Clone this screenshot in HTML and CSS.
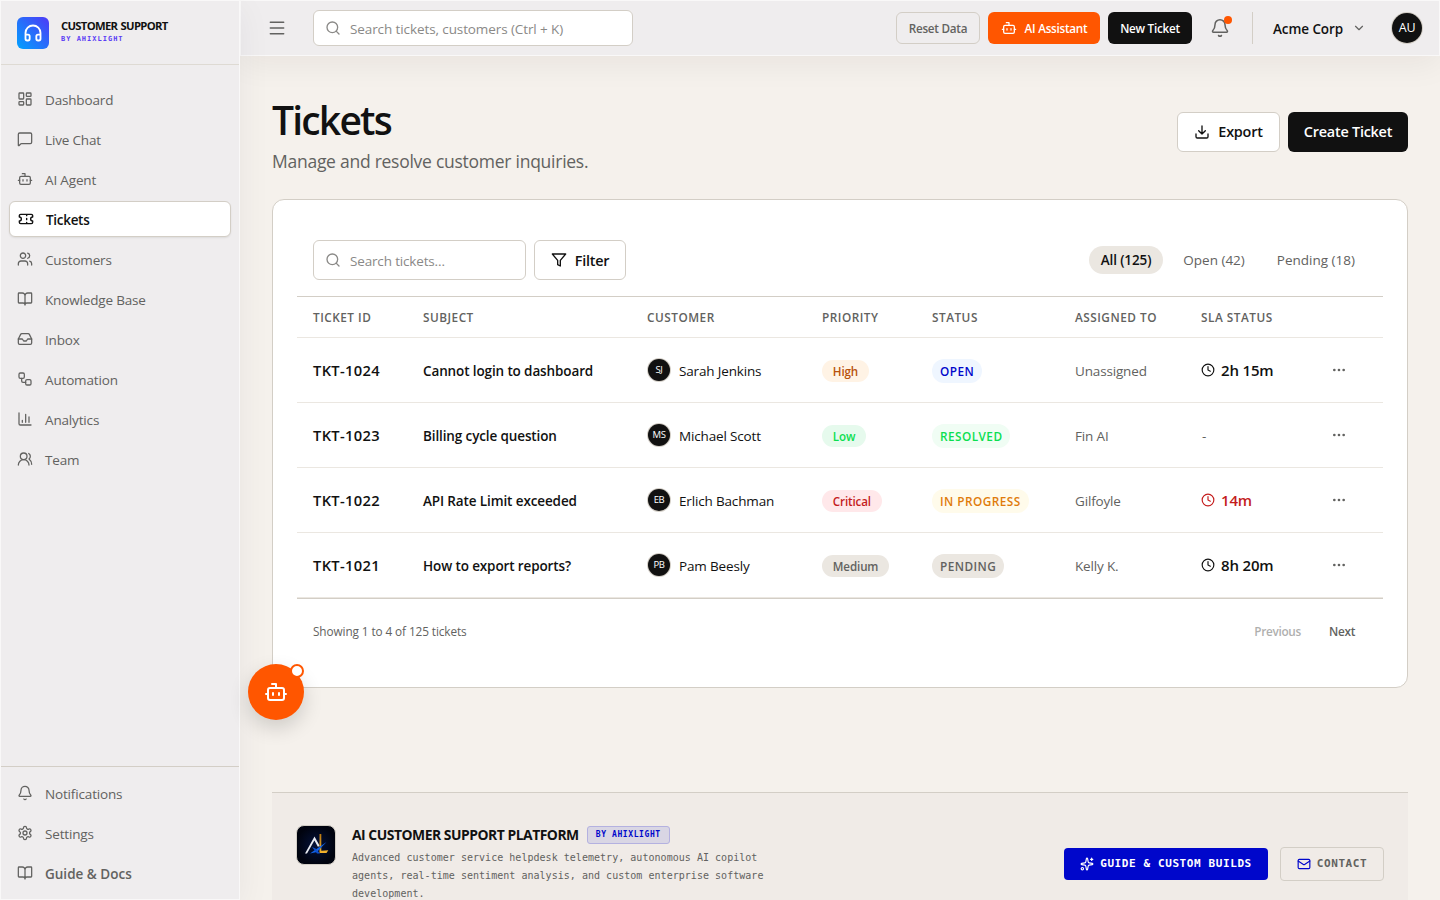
FILE: index.html
```html
<!DOCTYPE html>
<html lang="en">
<head>
<meta charset="utf-8">
<title>Tickets</title>
<link rel="stylesheet" href="styles.css">
</head>
<body>
<svg class="defs" aria-hidden="true">
  <symbol id="dash" viewBox="0 0 24 24"><rect x="3" y="3" width="7" height="9" rx="1"/><rect x="14" y="3" width="7" height="5" rx="1"/><rect x="14" y="12" width="7" height="9" rx="1"/><rect x="3" y="16" width="7" height="5" rx="1"/></symbol>
  <symbol id="chat" viewBox="0 0 24 24"><path d="M22 17a2 2 0 0 1-2 2H6.828a2 2 0 0 0-1.414.586l-2.202 2.202A.71.71 0 0 1 2 21.286V5a2 2 0 0 1 2-2h16a2 2 0 0 1 2 2z"/></symbol>
  <symbol id="bot" viewBox="0 0 24 24"><path d="M12 8V4H8"/><rect x="4" y="8" width="16" height="12" rx="2"/><path d="M2 14h2M20 14h2M15 13v2M9 13v2"/></symbol>
  <symbol id="ticket" viewBox="0 0 24 24"><path d="M2 9a3 3 0 0 1 0 6v2a2 2 0 0 0 2 2h16a2 2 0 0 0 2-2v-2a3 3 0 0 1 0-6V7a2 2 0 0 0-2-2H4a2 2 0 0 0-2 2ZM13 5v2M13 17v2M13 11v2"/></symbol>
  <symbol id="users" viewBox="0 0 24 24"><path d="M16 21v-2a4 4 0 0 0-4-4H6a4 4 0 0 0-4 4v2"/><circle cx="9" cy="7" r="4"/><path d="M22 21v-2a4 4 0 0 0-3-3.87M16 3.13a4 4 0 0 1 0 7.75"/></symbol>
  <symbol id="book" viewBox="0 0 24 24"><path d="M12 7v14M3 18a1 1 0 0 1-1-1V4a1 1 0 0 1 1-1h5a4 4 0 0 1 4 4 4 4 0 0 1 4-4h5a1 1 0 0 1 1 1v13a1 1 0 0 1-1 1h-6a3 3 0 0 0-3 3 3 3 0 0 0-3-3z"/></symbol>
  <symbol id="inbox" viewBox="0 0 24 24"><path d="M22 12h-6l-2 3h-4l-2-3H2"/><path d="M5.45 5.11 2 12v6a2 2 0 0 0 2 2h16a2 2 0 0 0 2-2v-6l-3.45-6.89A2 2 0 0 0 16.76 4H7.24a2 2 0 0 0-1.79 1.11z"/></symbol>
  <symbol id="flow" viewBox="0 0 24 24"><rect x="3" y="3" width="8" height="8" rx="2"/><path d="M7 11v4a2 2 0 0 0 2 2h4"/><rect x="13" y="13" width="8" height="8" rx="2"/></symbol>
  <symbol id="chart" viewBox="0 0 24 24"><path d="M3 3v16a2 2 0 0 0 2 2h16M18 17V9M13 17V5M8 17v-3"/></symbol>
  <symbol id="team" viewBox="0 0 24 24"><path d="M18 21a8 8 0 0 0-16 0"/><circle cx="10" cy="8" r="5"/><path d="M22 20c0-3.37-2-6.5-4-8a5 5 0 0 0-.45-8.3"/></symbol>
  <symbol id="bell" viewBox="0 0 24 24"><path d="M10.268 21a2 2 0 0 0 3.464 0M3.262 15.326A1 1 0 0 0 4 17h16a1 1 0 0 0 .74-1.673C19.41 13.956 18 12.499 18 8A6 6 0 0 0 6 8c0 4.499-1.411 5.956-2.738 7.326"/></symbol>
  <symbol id="gear" viewBox="0 0 24 24"><path d="M12.22 2h-.44a2 2 0 0 0-2 2v.18a2 2 0 0 1-1 1.73l-.43.25a2 2 0 0 1-2 0l-.15-.08a2 2 0 0 0-2.73.73l-.22.38a2 2 0 0 0 .73 2.73l.15.1a2 2 0 0 1 1 1.72v.51a2 2 0 0 1-1 1.74l-.15.09a2 2 0 0 0-.73 2.73l.22.38a2 2 0 0 0 2.73.73l.15-.08a2 2 0 0 1 2 0l.43.25a2 2 0 0 1 1 1.73V20a2 2 0 0 0 2 2h.44a2 2 0 0 0 2-2v-.18a2 2 0 0 1 1-1.73l.43-.25a2 2 0 0 1 2 0l.15.08a2 2 0 0 0 2.73-.73l.22-.39a2 2 0 0 0-.73-2.73l-.15-.08a2 2 0 0 1-1-1.74v-.5a2 2 0 0 1 1-1.74l.15-.09a2 2 0 0 0 .73-2.73l-.22-.38a2 2 0 0 0-2.73-.73l-.15.08a2 2 0 0 1-2 0l-.43-.25a2 2 0 0 1-1-1.73V4a2 2 0 0 0-2-2z"/><circle cx="12" cy="12" r="3"/></symbol>
  <symbol id="phones" viewBox="0 0 24 24"><path d="M3 14h3a2 2 0 0 1 2 2v3a2 2 0 0 1-2 2H5a2 2 0 0 1-2-2v-7a9 9 0 0 1 18 0v7a2 2 0 0 1-2 2h-1a2 2 0 0 1-2-2v-3a2 2 0 0 1 2-2h3"/></symbol>
  <symbol id="menu" viewBox="0 0 24 24"><path d="M4 5h16M4 12h16M4 19h16"/></symbol>
  <symbol id="search" viewBox="0 0 24 24"><circle cx="11" cy="11" r="8"/><path d="m21 21-4.3-4.3"/></symbol>
  <symbol id="down" viewBox="0 0 24 24"><path d="m6 9 6 6 6-6"/></symbol>
  <symbol id="download" viewBox="0 0 24 24"><path d="M21 15v4a2 2 0 0 1-2 2H5a2 2 0 0 1-2-2v-4M7 10l5 5 5-5M12 15V3"/></symbol>
  <symbol id="filter" viewBox="0 0 24 24"><path d="M22 3H2l8 9.46V19l4 2v-8.54z"/></symbol>
  <symbol id="clock" viewBox="0 0 24 24"><circle cx="12" cy="12" r="10"/><path d="M12 6v6l4 2"/></symbol>
  <symbol id="dots" viewBox="0 0 24 24"><circle cx="5" cy="12" r="1"/><circle cx="12" cy="12" r="1"/><circle cx="19" cy="12" r="1"/></symbol>
  <symbol id="spark" viewBox="0 0 24 24"><path d="M11.017 2.814a1 1 0 0 1 1.966 0l1.051 5.558a2 2 0 0 0 1.594 1.594l5.558 1.051a1 1 0 0 1 0 1.966l-5.558 1.051a2 2 0 0 0-1.594 1.594l-1.051 5.558a1 1 0 0 1-1.966 0l-1.051-5.558a2 2 0 0 0-1.594-1.594l-5.558-1.051a1 1 0 0 1 0-1.966l5.558-1.051a2 2 0 0 0 1.594-1.594zM20 2v4M22 4h-4"/><circle cx="4" cy="20" r="2"/></symbol>
  <symbol id="mail" viewBox="0 0 24 24"><rect x="2" y="4" width="20" height="16" rx="2"/><path d="m22 7-8.97 5.7a1.94 1.94 0 0 1-2.06 0L2 7"/></symbol>
</svg>

<div class="app">
  <aside class="sidebar">
    <div class="brand">
      <div class="brand-mark"><svg class="icon i20"><use href="#phones"/></svg></div>
      <div><div class="brand-name">CUSTOMER SUPPORT</div><div class="brand-by">BY AHIXLIGHT</div></div>
    </div>
    <nav class="nav">
      <a class="item"><svg class="icon i16"><use href="#dash"/></svg><span>Dashboard</span></a>
      <a class="item"><svg class="icon i16"><use href="#chat"/></svg><span>Live Chat</span></a>
      <a class="item"><svg class="icon i16"><use href="#bot"/></svg><span>AI Agent</span></a>
      <a class="item active"><svg class="icon i16"><use href="#ticket"/></svg><span>Tickets</span></a>
      <a class="item"><svg class="icon i16"><use href="#users"/></svg><span>Customers</span></a>
      <a class="item"><svg class="icon i16"><use href="#book"/></svg><span>Knowledge Base</span></a>
      <a class="item"><svg class="icon i16"><use href="#inbox"/></svg><span>Inbox</span></a>
      <a class="item"><svg class="icon i16"><use href="#flow"/></svg><span>Automation</span></a>
      <a class="item"><svg class="icon i16"><use href="#chart"/></svg><span>Analytics</span></a>
      <a class="item"><svg class="icon i16"><use href="#team"/></svg><span>Team</span></a>
    </nav>
    <div class="nav-bottom">
      <a class="item"><svg class="icon i16"><use href="#bell"/></svg><span>Notifications</span></a>
      <a class="item"><svg class="icon i16"><use href="#gear"/></svg><span>Settings</span></a>
      <a class="item strong"><svg class="icon i16"><use href="#book"/></svg><span>Guide &amp; Docs</span></a>
    </div>
  </aside>

  <div class="column">
    <header class="topbar">
      <svg class="icon i20 burger"><use href="#menu"/></svg>
      <div class="field top-search"><svg class="icon i16"><use href="#search"/></svg><span>Search tickets, customers (Ctrl + K)</span></div>
      <div class="top-actions">
        <button class="small ghost">Reset Data</button>
        <button class="small orange"><svg class="icon i16"><use href="#bot"/></svg>AI Assistant</button>
        <button class="small dark">New Ticket</button>
        <div class="bell"><svg class="icon i20"><use href="#bell"/></svg><i class="bell-dot"></i></div>
        <div class="divider"></div>
        <div class="org"><span>Acme Corp</span><svg class="icon i14"><use href="#down"/></svg></div>
        <div class="me">AU</div>
      </div>
    </header>

    <main class="main">
      <div class="page-head">
        <div><h1>Tickets</h1><p class="lead">Manage and resolve customer inquiries.</p></div>
        <div class="head-actions">
          <button class="big light export"><svg class="icon i16"><use href="#download"/></svg><span>Export</span></button>
          <button class="big dark create"><span>Create Ticket</span></button>
        </div>
      </div>

      <section class="card">
        <div class="toolbar">
          <div class="field list-search"><svg class="icon i16"><use href="#search"/></svg><span>Search tickets...</span></div>
          <button class="big light filter"><svg class="icon i16"><use href="#filter"/></svg><span>Filter</span></button>
          <div class="tabs"><span class="tab on">All (125)</span><span class="tab">Open (42)</span><span class="tab">Pending (18)</span></div>
        </div>
        <table class="tickets">
          <colgroup><col class="c1"><col class="c2"><col class="c3"><col class="c4"><col class="c5"><col class="c6"><col class="c7"><col></colgroup>
          <thead><tr><th>TICKET ID</th><th>SUBJECT</th><th>CUSTOMER</th><th>PRIORITY</th><th>STATUS</th><th>ASSIGNED TO</th><th>SLA STATUS</th><th></th></tr></thead>
          <tbody>
            <tr><td class="id">TKT-1024</td><td class="subject">Cannot login to dashboard</td><td><div class="person"><b>SJ</b><span>Sarah Jenkins</span></div></td><td><span class="prio high">High</span></td><td><span class="status open">OPEN</span></td><td class="who">Unassigned</td><td><div class="sla"><svg class="icon i14"><use href="#clock"/></svg><span>2h 15m</span></div></td><td><svg class="icon i16 more"><use href="#dots"/></svg></td></tr>
            <tr><td class="id">TKT-1023</td><td class="subject">Billing cycle question</td><td><div class="person"><b>MS</b><span>Michael Scott</span></div></td><td><span class="prio low">Low</span></td><td><span class="status resolved">RESOLVED</span></td><td class="who">Fin AI</td><td class="who none">-</td><td><svg class="icon i16 more"><use href="#dots"/></svg></td></tr>
            <tr><td class="id">TKT-1022</td><td class="subject">API Rate Limit exceeded</td><td><div class="person"><b>EB</b><span>Erlich Bachman</span></div></td><td><span class="prio critical">Critical</span></td><td><span class="status progress">IN PROGRESS</span></td><td class="who">Gilfoyle</td><td><div class="sla late"><svg class="icon i14"><use href="#clock"/></svg><span>14m</span></div></td><td><svg class="icon i16 more"><use href="#dots"/></svg></td></tr>
            <tr><td class="id">TKT-1021</td><td class="subject">How to export reports?</td><td><div class="person"><b>PB</b><span>Pam Beesly</span></div></td><td><span class="prio medium">Medium</span></td><td><span class="status pending">PENDING</span></td><td class="who">Kelly K.</td><td><div class="sla"><svg class="icon i14"><use href="#clock"/></svg><span>8h 20m</span></div></td><td><svg class="icon i16 more"><use href="#dots"/></svg></td></tr>
          </tbody>
        </table>
        <div class="pager"><span class="count">Showing 1 to 4 of 125 tickets</span><span class="page-link off">Previous</span><span class="page-link">Next</span></div>
      </section>

      <footer class="foot">
        <svg class="foot-logo" viewBox="0 0 40 40">
          <defs>
            <radialGradient id="lg"><stop offset="0" stop-color="#04123a"/><stop offset="1" stop-color="#00030f"/></radialGradient>
            <linearGradient id="gold" x1="0" y1="0" x2="0" y2="1"><stop offset="0" stop-color="#b8770f"/><stop offset="1" stop-color="#f3b32c"/></linearGradient>
          </defs>
          <rect x=".5" y=".5" width="39" height="39" rx="7.5" fill="url(#lg)" stroke="#d3cec6"/>
          <path d="M23.500 9h1.800v16.800l7-.5-1.800 2.700h-7z" fill="url(#gold)"/>
          <path d="M9 28.500 18.500 11.500 23.500 20.500l-1.500 1.500-3.600-6.500L11 28.500z" fill="#e8ebf2"/>
          <path d="M14 28.500 30.500 17l-9.500 10z" fill="#1264e8"/><path d="m16 22 3.500 1.500 4.500 5h-3z" fill="#0b4fd0"/>
        </svg>
        <div class="foot-text">
          <div class="foot-title"><span>AI CUSTOMER SUPPORT PLATFORM</span><em>BY AHIXLIGHT</em></div>
          <p>Advanced customer service helpdesk telemetry, autonomous AI copilot agents, real-time sentiment analysis, and custom enterprise software development.</p>
        </div>
        <div class="foot-actions">
          <a class="cta"><svg class="icon i14"><use href="#spark"/></svg>GUIDE &amp; CUSTOM BUILDS</a>
          <a class="contact"><svg class="icon i14"><use href="#mail"/></svg>CONTACT</a>
        </div>
      </footer>
    </main>
  </div>
  <button class="fab"><svg class="icon i24"><use href="#bot"/></svg><i></i></button>
</div>
</body>
</html>
```
FILE: styles.css
```css
* { box-sizing: border-box; }
body { margin: 0; height: 900px; overflow: hidden; background: #f5f1ec; color: #111; font-family: "Open Sans", "Noto Sans", sans-serif; font-size: 13.5px; letter-spacing: -.16px; line-height: 20px; }
button { font-family: inherit; letter-spacing: inherit; margin: 0; padding: 0; border: 0; }
h1, p { margin: 0; }
.defs { position: absolute; width: 0; height: 0; }
.icon { flex: none; display: block; fill: none; stroke: currentColor; stroke-width: 2; stroke-linecap: round; stroke-linejoin: round; }
.i14 { width: 14px; height: 14px; }
.i16 { width: 16px; height: 16px; }
.i20 { width: 20px; height: 20px; stroke-width: 1.8; }
.i24 { width: 24px; height: 24px; }

.app { display: flex; height: 900px; }

.sidebar { position: relative; z-index: 2; width: 240px; flex: none; display: flex; flex-direction: column; background: #efedee; border: 1px solid #f9f8f8; box-shadow: 0 8px 32px rgba(31, 25, 60, .06); }
.brand { height: 64px; display: flex; align-items: center; gap: 12px; padding: 0 16px; border-bottom: 1px solid #dedad3; }
.brand-mark { width: 32px; height: 32px; border-radius: 6px; display: grid; place-items: center; color: #fff; background: linear-gradient(45deg, #00a2ff, #4f39f6); }
.brand-mark .icon { stroke-width: 2.2; }
.brand-name { font-size: 11.3px; font-weight: 700; line-height: 15px; letter-spacing: -.7px; word-spacing: 1px; white-space: nowrap; margin-top: -1px; }
.brand-by { font-family: "DejaVu Sans Mono", monospace; font-weight: 700; font-size: 7px; line-height: 13px; letter-spacing: 1px; color: #5b3df5; }
.nav { flex: 1; padding: 16px 8px; display: flex; flex-direction: column; gap: 4px; }
.nav-bottom { border-top: 1px solid #d3cec6; padding: 8px; display: flex; flex-direction: column; gap: 4px; }
.item { height: 36px; display: flex; align-items: center; gap: 12px; padding: 0 8px; color: #626260; }
.item .icon { stroke-width: 1.9; }
.item span { padding-top: 2px; }
.item.active { background: #fff; border: 1px solid #d3cec6; border-radius: 6px; color: #111; font-weight: 600; letter-spacing: -.3px; box-shadow: 0 1px 2px rgba(0, 0, 0, .08); }
.item.active .icon { stroke-width: 2.1; }
.item.strong { font-weight: 600; letter-spacing: 0; }

.column { flex: 1; min-width: 0; display: flex; flex-direction: column; }
.topbar { height: 56px; flex: none; display: flex; align-items: center; padding: 0 17px 0 26px; background: #efedee; border: 1px solid #f9f8f8; box-shadow: 0 8px 32px rgba(31, 25, 20, .06); }
.burger { color: #626260; }
.field { display: flex; align-items: center; gap: 9px; padding: 0 11px; background: #fff; border: 1px solid #d3cec6; border-radius: 6px; color: #8a8987; }
.field span { padding-top: 2px; white-space: nowrap; }
.top-search { width: 320px; height: 36px; margin-left: 26px; }
.top-search span { letter-spacing: -.1px; }
.top-actions { margin-left: auto; display: flex; align-items: center; }
.small { height: 32px; border-radius: 6px; font-size: 11.7px; font-weight: 600; letter-spacing: -.25px; display: flex; align-items: center; justify-content: center; gap: 8px; margin-right: 8px; white-space: nowrap; }
.ghost { width: 84px; background: transparent; border: 1px solid #d3cec6; color: #626260; }
.orange { width: 112px; background: #ff5600; color: #fff; }
.orange .icon { stroke-width: 1.9; }
.dark { background: #111; color: #fff; }
.small.dark { width: 84px; margin-right: 18px; }
.bell { position: relative; color: #626260; }
.bell-dot { position: absolute; width: 8px; height: 8px; right: -2px; top: -2px; border-radius: 50%; background: #ff5600; }
.divider { width: 1px; height: 32px; background: #d3cec6; margin: 0 20px 0 22px; }
.org { display: flex; align-items: center; gap: 9px; font-weight: 600; letter-spacing: -.08px; }
.org span { width: 70px; padding-top: 2px; white-space: nowrap; }
.org .icon { color: #626260; }
.me { width: 30px; height: 30px; margin-left: 26px; border-radius: 50%; background: #111; color: #fff; font-size: 12.5px; font-weight: 500; display: grid; place-items: center; box-shadow: 0 0 0 1px #d3cec6; }

.main { flex: 1; min-height: 0; overflow: hidden; padding: 40px 32px 0; }
.page-head { display: flex; justify-content: space-between; align-items: center; height: 72px; }
h1 { font-size: 39px; line-height: 48px; font-weight: 600; letter-spacing: -1.8px; margin-top: 6px; }
.lead { font-size: 17.500px; line-height: 28px; letter-spacing: -.26px; color: #626260; margin-top: 3px; white-space: nowrap; }
.head-actions { display: flex; gap: 8px; }
.big { height: 40px; border-radius: 6px; font-size: 14.4px; font-weight: 600; letter-spacing: -.22px; display: flex; align-items: center; justify-content: center; gap: 8px; white-space: nowrap; color: #111; }
.big span { padding-bottom: 1px; }
.light { background: #fff; border: 1px solid #d3cec6; }
.export { width: 103px; }
.create { width: 120px; color: #fff; }
.filter { width: 92px; margin-left: 8px; }
.filter span { padding: 0; }

.card { margin-top: 31px; height: 489px; padding: 24px; background: #fff; border: 1px solid #d3cec6; border-radius: 12px; }
.toolbar { height: 73px; padding: 0 16px; display: flex; align-items: center; border-bottom: 1px solid #d3cec6; }
.list-search { width: 213px; height: 40px; }
.tabs { margin-left: auto; display: flex; gap: 8px; }
.tab { height: 28px; padding: 0 12px; border-radius: 14px; line-height: 28px; letter-spacing: 0; color: #626260; white-space: nowrap; }
.tab.on { background: #ebe7e1; color: #111; font-weight: 600; letter-spacing: -.13px; }

.tickets { width: 100%; table-layout: fixed; border-collapse: separate; border-spacing: 0; }
.c1 { width: 110px; } .c2 { width: 224px; } .c3 { width: 175px; } .c4 { width: 110px; } .c5 { width: 143px; } .c6 { width: 126px; } .c7 { width: 130px; }
th, td { padding: 0 0 0 16px; text-align: left; border-bottom: 1px solid #ebe7e1; white-space: nowrap; vertical-align: middle; }
th { height: 41px; font-size: 11.8px; line-height: 18px; font-weight: 600; letter-spacing: .5px; color: #626260; }
td { height: 65px; padding-top: 1px; }
.id { font-size: 14.7px; font-weight: 600; letter-spacing: .35px; padding-top: 0; }
.subject { font-weight: 600; letter-spacing: -.12px; }
.who { color: #626260; }
.none { padding-left: 17px; }
.person { display: flex; align-items: center; gap: 9px; }
.person b { width: 22px; height: 22px; margin: 0 0 2px 1px; border-radius: 50%; background: #111; color: #fff; font-size: 9.500px; font-weight: 500; line-height: 22px; text-align: center; box-shadow: 0 0 0 1px #d3cec6; letter-spacing: -.4px; }
.prio, .status { display: inline-block; vertical-align: middle; border-radius: 12px; font-weight: 600; }
.prio { height: 22px; line-height: 23px; padding: 0 10.800px; font-size: 11.6px; letter-spacing: -.12px; }
.status { height: 24px; line-height: 25px; padding: 0 8px; font-size: 11.8px; letter-spacing: .45px; }
.high { background: #fff3e5; color: #b8510c; }
.low { background: #e6faed; color: #0bdf50; }
.critical { background: #ffe8ea; color: #c41c1c; }
.medium, .pending { background: #ebe7e1; color: #626260; }
.open { background: #eff6ff; color: #0007cb; }
.resolved { background: #f0fdf4; color: #0bdf50; }
.progress { background: #fffbeb; color: #e07b0a; }
.sla { display: flex; align-items: center; gap: 6px; padding-bottom: 1px; font-size: 15px; font-weight: 600; }
.late { color: #c41c1c; }
.more { color: #626260; margin-bottom: 2px; }
.pager { display: flex; align-items: center; height: 65px; padding: 0 28px 0 16px; border-top: 1px solid #d3cec6; font-size: 11.8px; letter-spacing: -.1px; color: #626260; }
.count { margin-right: auto; }
.page-link { font-weight: 600; margin-left: 28px; letter-spacing: -.3px; }
.off { opacity: .5; }

.foot { margin-top: 104px; height: 150px; border-top: 1px solid #d3cec6; background: #f0ebe7; padding: 32px 24px 0; display: flex; align-items: flex-start; }
.foot-logo { width: 40px; height: 40px; flex: none; }
.foot-text { margin-left: 16px; width: 440px; }
.foot-title { display: flex; align-items: center; gap: 8px; height: 20px; font-size: 13.9px; font-weight: 700; letter-spacing: -.48px; white-space: nowrap; }
.foot-title em { font: 700 8px/16px "DejaVu Sans Mono", monospace; letter-spacing: .6px; color: #0007cb; background: #d9d6e4; border: 1px solid #b4b1e0; border-radius: 3px; padding: 0 8px; }
.foot-text p { font: 10px/18px "DejaVu Sans Mono", monospace; letter-spacing: .03px; color: #626260; margin-top: 4px; }
.foot-actions { margin-left: auto; display: flex; align-items: center; gap: 12px; margin-top: 22px; font: 700 11px/16px "DejaVu Sans Mono", monospace; letter-spacing: .6px; }
.cta, .contact { display: flex; align-items: center; justify-content: center; gap: 6px; border-radius: 4px; white-space: nowrap; }
.cta { width: 204px; height: 32px; background: #0007cb; color: #fff; }
.contact { width: 104px; height: 34px; border: 1px solid #d3cec6; color: #626260; }
.contact .icon { color: #0007cb; }

.fab { position: absolute; z-index: 3; left: 248px; top: 664px; width: 56px; height: 56px; border-radius: 50%; background: #ff5600; color: #fff; display: grid; place-items: center; box-shadow: 0 8px 20px rgba(0, 0, 0, .16); }
.fab i { position: absolute; right: 0; top: 0; width: 14px; height: 14px; border-radius: 50%; background: #fff; border: 2px solid #ff5600; }
```
